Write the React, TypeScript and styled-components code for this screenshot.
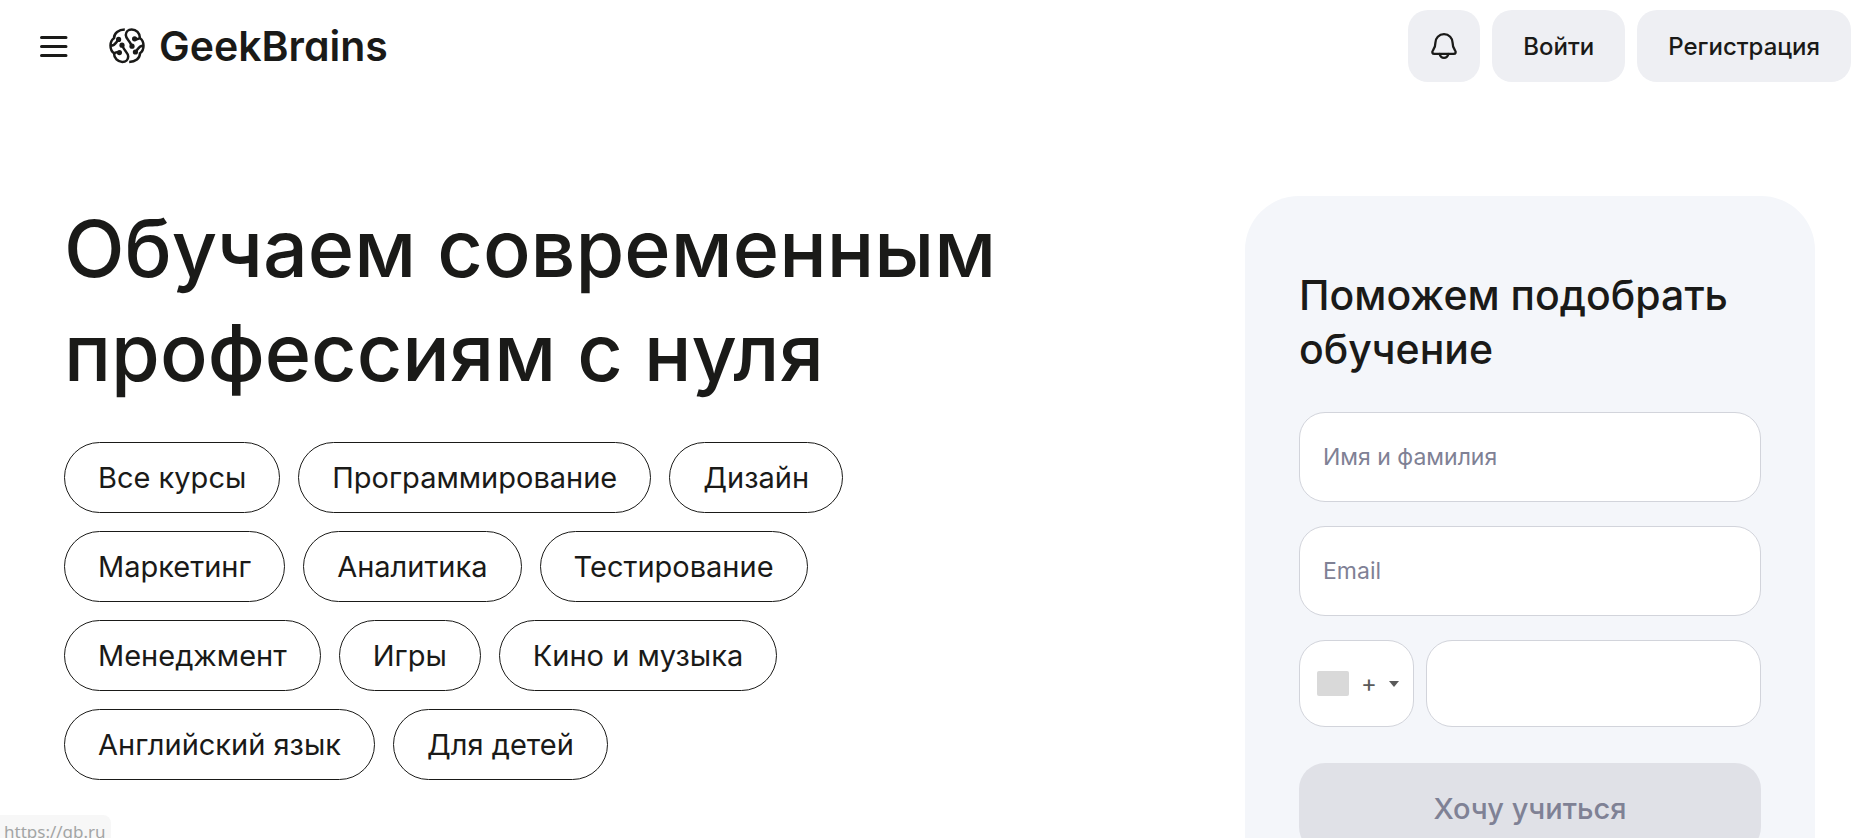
import React from 'react';
import styled, { createGlobalStyle } from 'styled-components';

const ink = '#1a1a18';
const muted = '#7f8195';

const GlobalStyle = createGlobalStyle`
  *, *::before, *::after { box-sizing: border-box; }
  body {
    margin: 0;
    background: #fff;
    color: ${ink};
    font-family: Inter, 'Liberation Sans', sans-serif;
  }
  button, input { font: inherit; color: inherit; }
`;

const Header = styled.header`
  display: flex;
  align-items: center;
  justify-content: space-between;
  padding: 10px 24px 10px 40px;
`;

const HeaderGroup = styled.div<{ $gap: number }>`
  display: flex;
  align-items: center;
  gap: ${p => p.$gap}px;
`;

const MenuButton = styled.button`
  display: flex;
  padding: 0;
  border: 0;
  background: none;
  cursor: pointer;
`;

const Logo = styled.a`
  display: flex;
  align-items: center;
  gap: 14px;
  color: inherit;
  text-decoration: none;
`;

const LogoText = styled.span`
  font-size: 41px;
  line-height: 48px;
  font-weight: 600;
  font-feature-settings: 'cv11';
`;

const HeaderButton = styled.button<{ $square?: boolean }>`
  display: flex;
  align-items: center;
  justify-content: center;
  height: 72px;
  min-width: 72px;
  padding: 0 ${p => (p.$square ? 0 : 31)}px;
  border: 0;
  border-radius: 20px;
  background: #eeeff3;
  font-size: 24px;
  font-weight: 500;
  cursor: pointer;
`;

const Hero = styled.main`
  display: flex;
  align-items: flex-start;
  justify-content: space-between;
  gap: 60px;
  padding: 104px 60px 60px 64px;
`;

const Intro = styled.section`
  flex: 0 1 960px;
`;

const Heading = styled.h1`
  margin: 0 0 38px;
  font-size: 79px;
  line-height: 104px;
  font-weight: 500;
`;

const Tags = styled.nav`
  display: flex;
  flex-wrap: wrap;
  gap: 18px;
`;

const Tag = styled.a`
  display: flex;
  align-items: center;
  height: 71px;
  padding: 0 33px;
  border: 1px solid ${ink};
  border-radius: 36px;
  color: inherit;
  font-size: 29px;
  text-decoration: none;
`;

const Card = styled.form`
  display: flex;
  flex-direction: column;
  flex: 0 0 570px;
  padding: 72px 54px;
  border-radius: 54px;
  background: #f4f6fa;
`;

const CardTitle = styled.h2`
  margin: 0 0 36px;
  font-size: 41px;
  line-height: 54px;
  font-weight: 500;
`;

const Fields = styled.div`
  display: flex;
  flex-direction: column;
  gap: 24px;
  margin-bottom: 36px;
`;

const Field = styled.input<{ $height?: number }>`
  width: 100%;
  min-width: 0;
  height: ${p => p.$height ?? 90}px;
  padding: 0 23px;
  border: 1px solid #d2d4db;
  border-radius: 26px;
  background: #fff;
  font-size: 23px;
  outline: none;
  &::placeholder { color: ${muted}; opacity: 1; }
`;

const PhoneRow = styled.div`
  display: flex;
  gap: 12px;
`;

const CodeButton = styled.button`
  display: flex;
  flex: 0 0 115px;
  align-items: center;
  justify-content: space-between;
  height: 87px;
  padding: 0 14px 0 17px;
  border: 1px solid #d2d4db;
  border-radius: 26px;
  background: #fff;
  color: #5a5a5a;
  font-size: 24px;
  line-height: 24px;
  cursor: pointer;
`;

const Flag = styled.span`
  width: 32px;
  height: 25px;
  border-radius: 2px;
  background: #d9d9d9;
`;

const Submit = styled.button`
  height: 90px;
  border: 0;
  border-radius: 26px;
  background: #e0e1e7;
  font-size: 29px;
  font-weight: 500;
  &:disabled { color: ${muted}; }
`;

const LinkStatus = styled.div`
  position: fixed;
  left: 0;
  bottom: 0;
  height: 23px;
  padding: 4px 5px 0 4px;
  overflow: hidden;
  border-radius: 0 8px 0 0;
  background: #f7f7f7;
  color: #a3a5a5;
  font-family: 'Noto Sans', sans-serif;
  font-size: 17px;
  line-height: 26px;
`;

const MenuIcon = () => (
  <svg width="28" height="28" viewBox="0 0 28 28" fill="none" stroke={ink} strokeWidth="3" strokeLinecap="round" aria-hidden>
    <path d="M1.5 5.500h24.500M1.500 14.500h24.500M1.500 23.500h24.500" />
  </svg>
);

const BrainHalf = () => (
  <>
    <path d="M15.8 1.5C9.6 1.6 5 5 5 10.2 2.6 11.7 1.5 14.4 1.5 17.6S2.6 23.7 5 25.2C5 30.2 8.8 33.9 13.3 33.9 17 33.9 19.2 31.6 19.2 28.4 19.2 24.6 15.600 23.400 13.4 17.9" />
    <path d="M2 17.6C6 17.6 6.600 15 9.2 11.8M5 25.600C6.400 24 8 24 10 24.6" />
    <g fill={ink} stroke="none">
      <circle cx="9.6" cy="11.4" r="2.600" />
      <circle cx="13" cy="17.2" r="2.600" />
      <circle cx="10.4" cy="24.6" r="2.600" />
    </g>
  </>
);

const BrainIcon = () => (
  <svg width="36" height="36" viewBox="0 0 36 36" fill="none" stroke={ink} strokeWidth="2.500" strokeLinecap="butt" aria-hidden>
    <BrainHalf />
    <g transform="rotate(180 18 17.7)">
      <BrainHalf />
    </g>
  </svg>
);

const BellIcon = () => (
  <svg width="28" height="28" viewBox="0 0 28 28" fill="none" stroke={ink} strokeWidth="2.3" strokeLinecap="round" strokeLinejoin="round" aria-hidden>
    <path d="M14 2.200C9 2.200 5.400 6 5.400 10.800c0 4.500-.7 5.200-2.300 7.300-1.500 2-.8 3.800 1.300 3.800h19.200c2.100 0 2.800-1.800 1.300-3.800-1.600-2.100-2.300-2.800-2.300-7.300C22.600 6 19 2.200 14 2.200Z" />
    <path d="M9.600 22c.6 2.500 2.300 3.900 4.400 3.900s3.800-1.400 4.400-3.900" />
  </svg>
);

const CaretIcon = () => (
  <svg width="10" height="6" viewBox="0 0 10 6" fill="#5a5a5a" aria-hidden>
    <path d="M0 0h10L5 6z" />
  </svg>
);

const topics = [
  'Все курсы',
  'Программирование',
  'Дизайн',
  'Маркетинг',
  'Аналитика',
  'Тестирование',
  'Менеджмент',
  'Игры',
  'Кино и музыка',
  'Английский язык',
  'Для детей',
];

export default function App() {
  return (
    <>
      <GlobalStyle />
      <Header>
        <HeaderGroup $gap={41}>
          <MenuButton type="button" aria-label="Меню">
            <MenuIcon />
          </MenuButton>
          <Logo href="#">
            <BrainIcon />
            <LogoText>GeekBrains</LogoText>
          </Logo>
        </HeaderGroup>
        <HeaderGroup $gap={12}>
          <HeaderButton type="button" $square aria-label="Уведомления">
            <BellIcon />
          </HeaderButton>
          <HeaderButton type="button">Войти</HeaderButton>
          <HeaderButton type="button">Регистрация</HeaderButton>
        </HeaderGroup>
      </Header>
      <Hero>
        <Intro>
          <Heading>Обучаем современным профессиям с нуля</Heading>
          <Tags>
            {topics.map(topic => (
              <Tag key={topic} href="#">{topic}</Tag>
            ))}
          </Tags>
        </Intro>
        <Card>
          <CardTitle>Поможем подобрать обучение</CardTitle>
          <Fields>
            <Field type="text" placeholder="Имя и фамилия" aria-label="Имя и фамилия" />
            <Field type="email" placeholder="Email" aria-label="Email" />
            <PhoneRow>
              <CodeButton type="button" aria-haspopup="listbox" aria-label="Код страны">
                <Flag />
                <span>+</span>
                <CaretIcon />
              </CodeButton>
              <Field type="tel" $height={87} aria-label="Телефон" />
            </PhoneRow>
          </Fields>
          <Submit type="submit" disabled>Хочу учиться</Submit>
        </Card>
      </Hero>
      <LinkStatus>https://gb.ru</LinkStatus>
    </>
  );
}
